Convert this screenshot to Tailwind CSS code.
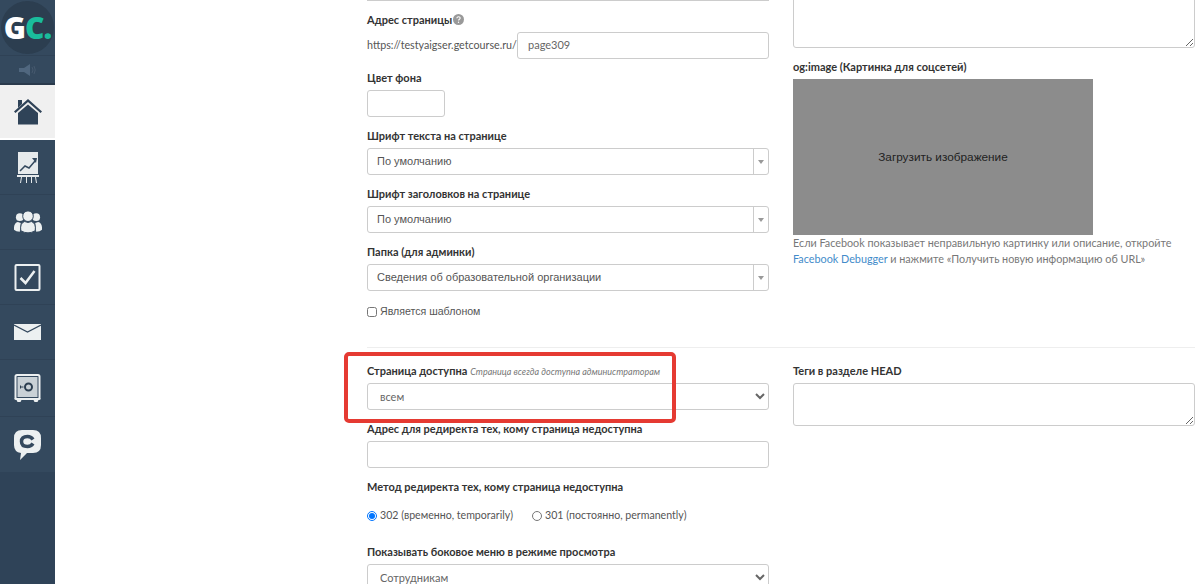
<!DOCTYPE html>
<html lang="ru">
<head>
    <meta charset="UTF-8">
    <title>Настройки страницы</title>
    <script src="https://cdn.jsdelivr.net/npm/@tailwindcss/browser@4"></script>
</head>
<body class="h-[584px] overflow-hidden bg-white font-['Lato',sans-serif] text-[11px] text-[#555]">
<div class="flex h-[584px] relative">
    <!-- sidebar -->
    <aside class="w-[55px] shrink-0 h-full bg-[#2f4358] flex flex-col">
        <div class="h-[55px] bg-[#34495e] flex items-center justify-center">
            <div class="w-[53px] h-[53px] rounded-full bg-[#2c3e50] flex items-center justify-center font-['Open_Sans',sans-serif] font-extrabold text-[30px] tracking-[-1px] leading-none text-white">G<span class="text-[#1abc9c]">C.</span></div>
        </div>
        <div class="h-[28px] bg-[#34495e] border-t border-[#2f4256] flex items-center justify-center">
            <svg class="w-[18px] h-[14px]" viewBox="0 0 18 14" fill="#50677f"><path d="M0 5h5l6-4v12l-6-4H0z"/><path d="M13 4q2 3 0 6M15 3q2.500 4 0 8" fill="none" stroke="#46596e"/></svg>
        </div>
        <div class="h-[2px] bg-[#2a3a4c]"></div>
        <div class="h-[53px] bg-[#f0f0f0] flex items-center justify-center">
            <svg class="w-[28px] h-[27px]" viewBox="0 0 28 27" fill="#2f4358"><path d="M4 2h4v4l-4 4z"/><path d="M0 13.500 14 1l14 12.500-1.500 1.500L14 4 1.500 15z"/><path d="M4 15 14 6.500 24 15v11.500H4z"/></svg>
        </div>
        <div class="h-[2px] bg-white"></div>
        <div class="h-[55px] bg-[#34495e] border-b border-[#2f4256] flex items-center justify-center">
            <svg class="w-[22px] h-[31px]" viewBox="0 0 22 31"><path d="M1 0h20v22H1z" fill="#e6eaec"/><path d="M3 19l5-5 4 2 6-7" fill="none" stroke="#34495e" stroke-width="1.500"/><path d="M15 6h5l-1 5z" fill="#34495e"/><path d="M0 23h22v2H0z" fill="#e6eaec"/><path d="M4 25l-1 6h1l1-6zM9 25v6h1v-6zM14 25v6h1v-6zM18 25l1 6h1l-1-6z" fill="#e6eaec"/></svg>
        </div>
        <div class="h-[55px] bg-[#34495e] border-b border-[#2f4256] flex items-center justify-center">
            <svg class="w-[28px] h-[24px]" viewBox="0 0 29 24" fill="#ecf0f1"><circle cx="6" cy="7" r="4"/><circle cx="23" cy="7" r="4"/><path d="M0 20q-.5-7 4-8l3 1-1 9q-4 0-6-2zM29 20q.5-7-4-8l-3 1 1 9q4 0 6-2z"/><circle cx="14.500" cy="6" r="5.500" stroke="#34495e"/><path d="M7 21q-1-8 4-9.500l3.500 1 3.500-1q5 1.500 4 9.500-7.500 4.500-15 0z" stroke="#34495e"/></svg>
        </div>
        <div class="h-[55px] bg-[#34495e] border-b border-[#2f4256] flex items-center justify-center">
            <svg class="w-[27px] h-[27px]" viewBox="0 0 26 27" fill="none"><rect x="1" y="1" width="24" height="25" rx="1" stroke="#ecf0f1" stroke-width="2"/><path d="M6 14l5 5 9-12" stroke="#ecf0f1" stroke-width="2.500"/></svg>
        </div>
        <div class="h-[55px] bg-[#34495e] border-b border-[#2f4256] flex items-center justify-center">
            <svg class="w-[27px] h-[16px]" viewBox="0 0 27 16"><path d="M0 0h27v16H0z" fill="#ecf0f1"/><path d="M0 1l13.500 7L27 1" fill="none" stroke="#34495e" stroke-width="1.200"/></svg>
        </div>
        <div class="h-[57px] bg-[#34495e] border-b border-[#2f4256] flex items-center justify-center">
            <svg class="w-[27px] h-[28px]" viewBox="0 0 26 28" fill="none"><rect x="1" y="1" width="24" height="24" rx="1.500" fill="#34495e" stroke="#ecf0f1" stroke-width="2"/><rect x="3" y="3" width="20" height="20" fill="#c9d1d6"/><path d="M0 24h26v1.500l-2 .5-1 2h-3l-1-2H7l-1 2H3l-1-2-2-.5z" fill="#ecf0f1"/><circle cx="14" cy="13" r="3.500" stroke="#2c3e50" stroke-width="2"/><path d="M6 13h3M6 11.500v3" stroke="#2c3e50"/></svg>
        </div>
        <div class="h-[55px] bg-[#34495e] flex items-center justify-center">
            <svg class="w-[27px] h-[30px]" viewBox="0 0 27 30"><path d="M8 0h11q8 0 8 8v7q0 8-8 8h-6l-7 7 1-7q-7-1-7-8V8q0-8 8-8z" fill="#ecf0f1"/><path d="M19 9.500q-2-3-5.500-3-6 0-6 5t6 5q3.500 0 5.500-3" fill="none" stroke="#34495e" stroke-width="3.500"/></svg>
        </div>
    </aside>

    <!-- form -->
    <main class="flex-1 pl-[312px] pr-[5px]">
        <div class="flex gap-[24px] h-[348px] border-b border-[#eee]">
            <div class="w-[402px] shrink-0">
                <div class="h-px bg-[#ccc]"></div>
                <div class="mt-[12px] h-[13px] flex items-center font-bold text-[#333] leading-none">Адрес страницы
                    <svg class="w-[11px] h-[11px] ml-[1px]" viewBox="0 0 11 11"><circle cx="5.500" cy="5.500" r="5.500" fill="#999"/><path d="M3.800 4.200q.2-1.500 1.800-1.500t1.600 1.400q0 .8-1 1.300-.6.3-.6 1" fill="none" stroke="#fff" stroke-width="1.100"/><circle cx="5.500" cy="8.300" r=".7" fill="#fff"/></svg>
                </div>
                <div class="mt-[6px] flex items-center">
                    <span class="w-[150px] shrink-0 text-[10.700px]">https://testyaigser.getcourse.ru/</span>
                    <div class="w-[252px] h-[27px] border border-[#ccc] rounded-[3px] pl-[10px] flex items-center text-[#666]">page309</div>
                </div>
                <div class="mt-[13px] h-[13px] flex items-center font-bold text-[#333]">Цвет фона</div>
                <div class="mt-[5px] w-[78px] h-[27px] border border-[#ccc] rounded-[3px]"></div>
                <div class="mt-[13px] h-[13px] flex items-center font-bold text-[#333]">Шрифт текста на странице</div>
                <div class="mt-[5px] h-[27px] border border-[#ccc] rounded-[3px] flex items-center font-['Liberation_Sans',sans-serif]">
                    <span class="flex-1 pl-[9px]">По умолчанию</span>
                    <span class="w-[15px] h-full border-l border-[#ccc] flex items-center justify-center"><span class="w-0 h-0 border-x-[3px] border-x-transparent border-t-[4px] border-t-[#999]"></span></span>
                </div>
                <div class="mt-[13px] h-[13px] flex items-center font-bold text-[#333]">Шрифт заголовков на странице</div>
                <div class="mt-[5px] h-[27px] border border-[#ccc] rounded-[3px] flex items-center font-['Liberation_Sans',sans-serif]">
                    <span class="flex-1 pl-[9px]">По умолчанию</span>
                    <span class="w-[15px] h-full border-l border-[#ccc] flex items-center justify-center"><span class="w-0 h-0 border-x-[3px] border-x-transparent border-t-[4px] border-t-[#999]"></span></span>
                </div>
                <div class="mt-[13px] h-[13px] flex items-center font-bold text-[#333]">Папка (для админки)</div>
                <div class="mt-[5px] h-[27px] border border-[#ccc] rounded-[3px] flex items-center font-['Liberation_Sans',sans-serif]">
                    <span class="flex-1 pl-[9px]">Сведения об образовательной организации</span>
                    <span class="w-[15px] h-full border-l border-[#ccc] flex items-center justify-center"><span class="w-0 h-0 border-x-[3px] border-x-transparent border-t-[4px] border-t-[#999]"></span></span>
                </div>
                <label class="mt-[14px] flex items-center gap-[3px] h-[14px] text-[10.600px] font-['Liberation_Sans',sans-serif]"><input type="checkbox" class="w-[10px] h-[10px] m-0"> Является шаблоном</label>
            </div>
            <div class="w-[402px] shrink-0">
                <textarea class="block w-[402px] h-[68px] -mt-[20px] border border-[#ccc] rounded-[3px]"></textarea>
                <div class="mt-[13px] h-[13px] flex items-center font-bold text-[#333]">og:image (Картинка для соцсетей)</div>
                <div class="mt-[5px] w-[300px] h-[156px] pt-[1px] bg-[#8c8c8c] flex items-center justify-center text-[11.800px] text-[#222] font-['Liberation_Sans',sans-serif]">Загрузить изображение</div>
                <p class="leading-[15.500px] text-[10.800px] text-[#777]">Если Facebook показывает неправильную картинку или описание, откройте<br><span class="text-[#428bca]">Facebook Debugger</span> и нажмите «Получить новую информацию об URL»</p>
            </div>
        </div>
        <div class="flex gap-[24px] pt-[17px]">
            <div class="w-[402px] shrink-0">
                <div class="h-[13px] flex items-center gap-[3px] font-bold text-[#333]">Страница доступна <span class="font-normal italic text-[9px] text-[#777]">Страница всегда доступна администраторам</span></div>
                <select class="block mt-[5px] w-full h-[27px] border border-[#ccc] rounded-[3px] pl-[8px] bg-white text-[#666]"><option>всем</option></select>
                <div class="mt-[13px] h-[13px] flex items-center font-bold text-[#333]">Адрес для редиректа тех, кому страница недоступна</div>
                <div class="mt-[5px] h-[27px] border border-[#ccc] rounded-[3px]"></div>
                <div class="mt-[13px] h-[13px] flex items-center font-bold text-[#333]">Метод редиректа тех, кому страница недоступна</div>
                <div class="mt-[15px] h-[14px] flex items-center text-[10.600px]">
                    <label class="flex items-center gap-[3px]"><input type="radio" name="redirect" checked class="w-[10px] h-[10px] m-0"> 302 (временно, temporarily)</label>
                    <label class="flex items-center gap-[3px] ml-[19px]"><input type="radio" name="redirect" class="w-[10px] h-[10px] m-0"> 301 (постоянно, permanently)</label>
                </div>
                <div class="mt-[23px] h-[13px] flex items-center font-bold text-[#333]">Показывать боковое меню в режиме просмотра</div>
                <select class="block mt-[5px] w-full h-[27px] border border-[#ccc] rounded-[3px] pl-[8px] bg-white text-[#666]"><option>Сотрудникам</option></select>
            </div>
            <div class="w-[402px] shrink-0">
                <div class="h-[13px] flex items-center font-bold text-[#333]">Теги в разделе HEAD</div>
                <textarea class="block mt-[5px] w-full h-[43px] border border-[#ccc] rounded-[3px]"></textarea>
            </div>
        </div>
    </main>

    <!-- red annotation frame -->
    <div class="absolute left-[344px] top-[352px] w-[332px] h-[71px] border-[4px] border-[#e53a32] rounded-[5px]"></div>
</div>
</body>
</html>
